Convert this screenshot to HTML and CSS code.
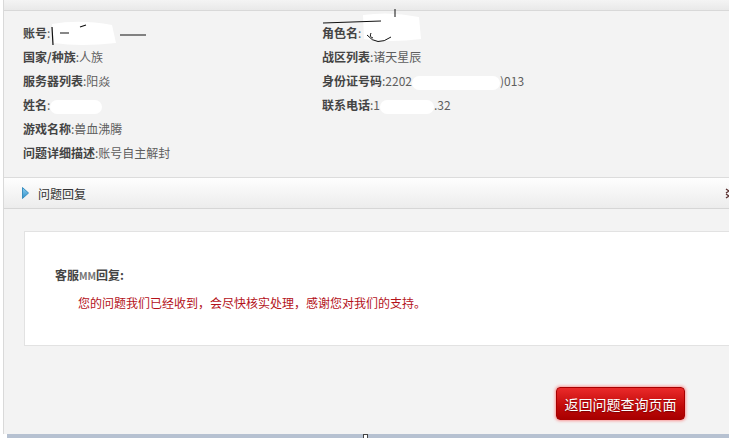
FILE: index.html
```html
<!DOCTYPE html>
<html lang="zh-CN">
<head>
    <meta charset="UTF-8">
    <title>问题查询</title>
    <link rel="stylesheet" href="styles.css">
</head>
<body>
    <div class="page">
        <div class="topbar"></div>

        <div class="info">
            <div class="row"><b>账号</b>:<svg class="mask" width="100" height="24" viewBox="0 0 100 24"><path d="M2 3 Q30 -2 62 4 L66 22 Q30 26 4 22 Z" fill="#fff"/><path d="M2 6 L3 24 M10 12 L19 12 M30 6 L36 4 M70 14 L96 14" stroke="#111" stroke-width="1.2" fill="none"/></svg></div>
            <div class="row"><b>角色名</b>:<svg class="mask" width="70" height="24" viewBox="0 0 70 24"><path d="M2 -6 Q30 -10 58 -4 L60 18 Q30 22 3 18 Z" fill="#fff"/><path d="M-38 2 L20 0 M6 14 Q16 26 30 16 M34 -12 L34 -4 M10 12 Q8 16 12 17" stroke="#111" stroke-width="1" fill="none"/></svg></div>

            <div class="row"><b>国家/种族</b>:人族</div>
            <div class="row"><b>战区列表</b>:诸天星辰</div>

            <div class="row"><b>服务器列表</b>:阳焱</div>
            <div class="row"><b>身份证号码</b>:2202<span class="blot wide"></span>)013</div>

            <div class="row"><b>姓名</b>:<span class="blot"></span></div>
            <div class="row"><b>联系电话</b>:1<span class="blot mid"></span>.32</div>

            <div class="row"><b>游戏名称</b>:兽血沸腾</div>
            <div class="row"></div>

            <div class="row"><b>问题详细描述</b>:账号自主解封</div>
        </div>

        <div class="section-head">
            <svg class="arrow" width="7" height="12" viewBox="0 0 7 12">
                <defs>
                    <linearGradient id="ag" x1="0" y1="0" x2="0" y2="1">
                        <stop offset="0" stop-color="#8fd0f2"/>
                        <stop offset="1" stop-color="#2f8fc8"/>
                    </linearGradient>
                </defs>
                <path d="M0.5 0.5 L6.5 6 L0.5 11.5 Z" fill="url(#ag)" stroke="#3a8fc0" stroke-width="1"/>
            </svg>
            <span class="section-title">问题回复</span>
            <svg class="fold" width="8" height="12" viewBox="0 0 8 12"><path d="M1 2 L4 4 L1 6 M1 7 L4 9 L1 11" stroke="#5a3030" stroke-width="1.4" fill="none"/></svg>
        </div>

        <div class="reply-box">
            <div class="reply-label">客服<span class="mm">MM</span>回复:</div>
            <div class="reply-text">您的问题我们已经收到，会尽快核实处理，感谢您对我们的支持。</div>
        </div>

        <div class="actions">
            <button class="back-btn">返回问题查询页面</button>
        </div>
    </div>
    <div class="statusbar"><span class="grip"></span></div>
</body>
</html>
```

FILE: styles.css
```css
/* General Styles */
html, body {
    margin: 0;
    padding: 0;
    overflow: hidden;
}

body {
    font-family: "Noto Sans CJK SC", "DejaVu Sans", sans-serif;
    font-size: 12px;
    background: #fff;
    color: #555;
    width: 729px;
    height: 438px;
}

.page {
    margin-left: 3px;
    width: 760px;
    height: 434px;
    border-left: 1px solid #d9d9d9;
    background: #f3f3f3;
}

.topbar {
    height: 10px;
    background: linear-gradient(#f4f4f4, #e9e9e9);
    border-bottom: 1px solid #d8d8d8;
}

/* Info grid */
.info {
    display: grid;
    grid-template-columns: 299px auto;
    padding: 10px 0 0 19px;
}

.row {
    height: 24px;
    line-height: 24px;
    white-space: nowrap;
    color: #5e5e5e;
}

.row b {
    color: #444;
}

.mask {
    vertical-align: top;
    overflow: visible;
}

.blot {
    display: inline-block;
    width: 52px;
    height: 14px;
    background: #fff;
    border-radius: 7px;
    vertical-align: middle;
}

.blot.wide {
    width: 88px;
}

.blot.mid {
    width: 54px;
}

/* Section header */
.section-head {
    display: flex;
    align-items: center;
    height: 30px;
    margin-top: 12px;
    padding: 0 31px 0 18px;
    border-top: 1px solid #dcdcdc;
    border-bottom: 1px solid #d6d6d6;
    background: linear-gradient(#fefefe, #ececec);
}

.arrow {
    margin-right: 9px;
}

.section-title {
    color: #333;
    font-size: 12px;
}

.fold {
    margin-left: auto;
}

/* Reply box */
.reply-box {
    margin: 22px 0 0 20px;
    height: 115px;
    background: #fff;
    border: 1px solid #e2e2e2;
    border-right: none;
    padding-left: 30px;
    box-sizing: border-box;
}

.reply-label {
    margin-top: 35px;
    line-height: 16px;
    font-weight: bold;
    color: #444;
}

.mm {
    font-size: 10px;
    color: #777;
}

.reply-text {
    margin: 11px 0 0 23px;
    line-height: 16px;
    color: #b4121a;
}

/* Button */
.actions {
    padding: 41px 0 0 552px;
}

.back-btn {
    width: 129px;
    height: 33px;
    padding: 0;
    border: 1px solid #a80000;
    border-radius: 4px;
    background: linear-gradient(#ea2a2a, #c10a0a 60%, #a80000);
    box-shadow: 0 0 3px 1px rgba(255, 90, 90, 0.6);
    color: #fff;
    font-family: "Noto Sans CJK SC", sans-serif;
    font-size: 14px;
    text-shadow: 0 1px 1px rgba(80, 0, 0, 0.6);
    cursor: pointer;
}

.statusbar {
    position: relative;
    margin-left: 7px;
    height: 4px;
    background: #b6c1d1;
}

.grip {
    position: absolute;
    left: 356px;
    top: 0;
    width: 3px;
    height: 4px;
    background: #fff;
    border: 1px solid #444;
    border-bottom: none;
}
```
